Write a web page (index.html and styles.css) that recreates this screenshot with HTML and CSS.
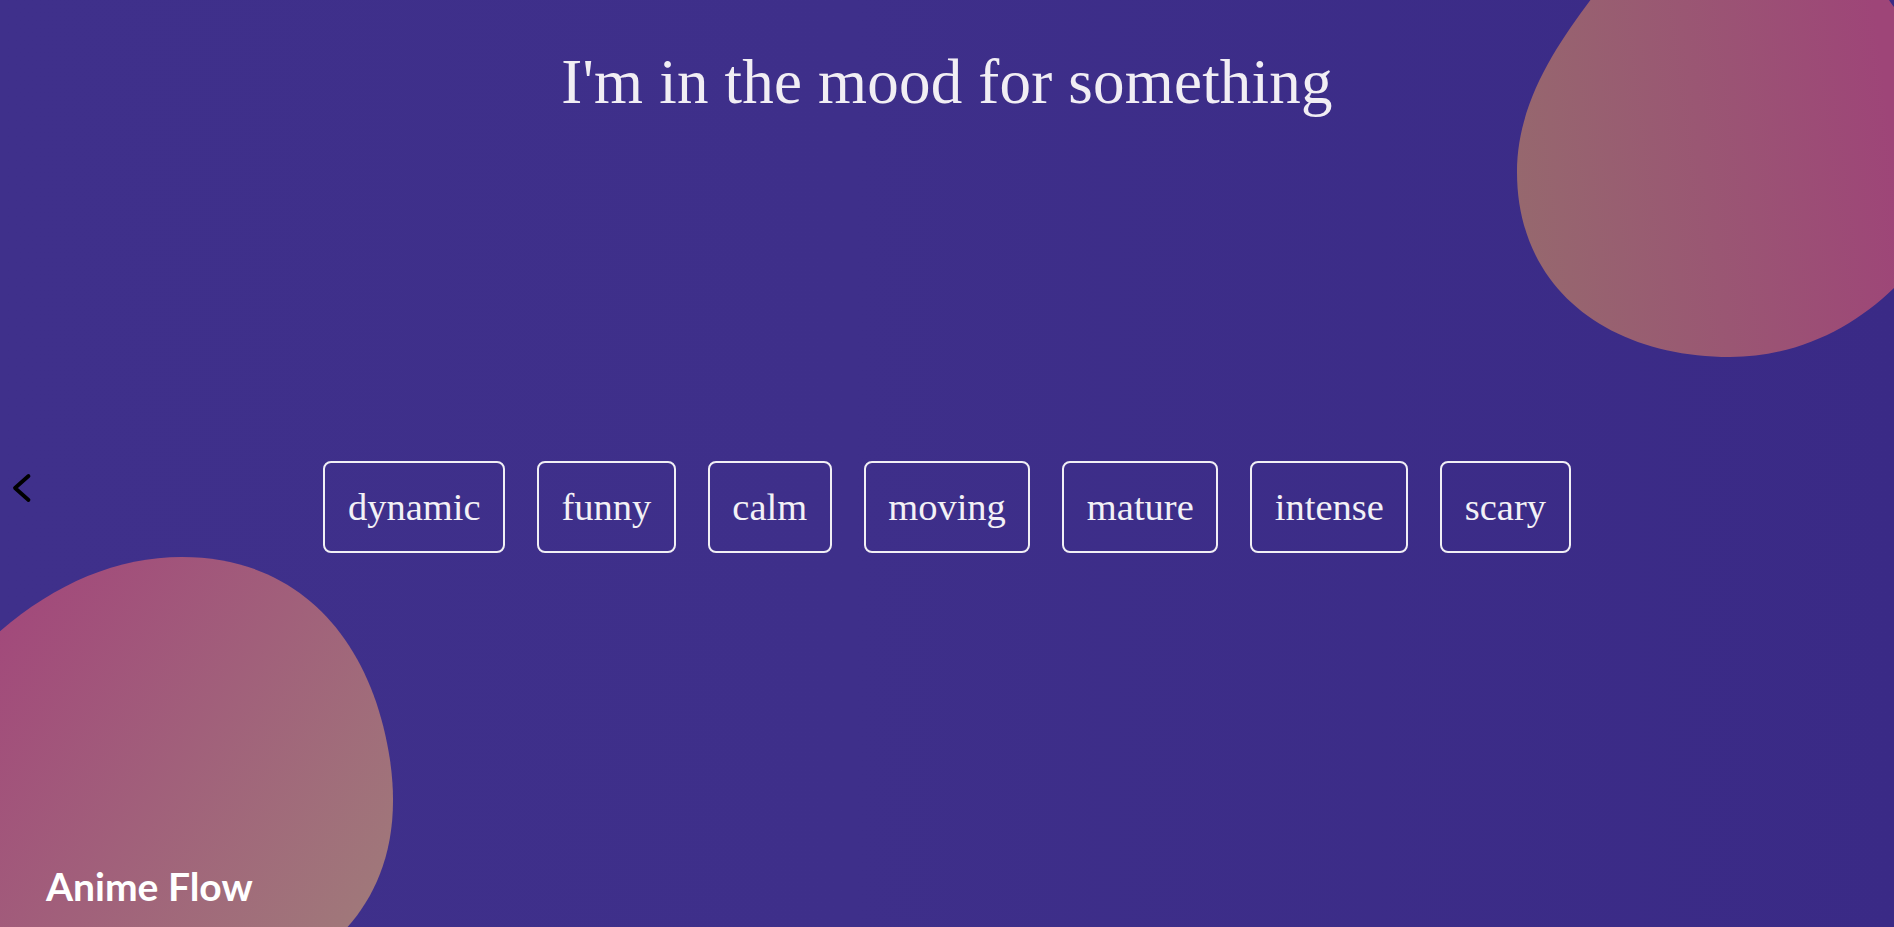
FILE: index.html
```html
<!DOCTYPE html>
<html lang="en">
<head>
<meta charset="utf-8">
<title>Anime Flow</title>
<link rel="stylesheet" href="styles.css">
</head>
<body>
<div class="page">
  <svg class="blobs" width="1894" height="927" viewBox="0 0 1894 927" aria-hidden="true">
    <defs>
      <linearGradient id="gTop" x1="1517" y1="200" x2="1894" y2="150" gradientUnits="userSpaceOnUse">
        <stop offset="0" stop-color="#96686e"/>
        <stop offset="1" stop-color="#9e4578"/>
      </linearGradient>
      <linearGradient id="gBottom" x1="0" y1="600" x2="390" y2="880" gradientUnits="userSpaceOnUse">
        <stop offset="0" stop-color="#a2487b"/>
        <stop offset="1" stop-color="#a0787a"/>
      </linearGradient>
    </defs>
    <path fill="url(#gTop)" d="M 1598 -10 C 1560 40, 1517 100, 1517 172 C 1517 290, 1610 357, 1730 357 C 1800 357, 1858 325, 1900 282 L 1900 14 C 1895 8, 1890 4, 1884 -10 Z"/>
    <path fill="url(#gBottom)" d="M -20 650 C 40 590, 110 557, 182 557 C 300 557, 372 640, 390 760 C 403 850, 372 905, 335 940 L -20 940 Z"/>
  </svg>

  <button class="nav-prev" aria-label="Previous">
    <svg width="20" height="34" viewBox="0 0 20 34"><polyline points="16.5,3 3,15 16.5,27" fill="none" stroke="#000" stroke-width="3.8" stroke-linecap="round" stroke-linejoin="round"/></svg>
  </button>

  <h1 class="title">I'm in the mood for something</h1>

  <div class="moods">
    <button class="mood">dynamic</button>
    <button class="mood">funny</button>
    <button class="mood">calm</button>
    <button class="mood">moving</button>
    <button class="mood">mature</button>
    <button class="mood">intense</button>
    <button class="mood">scary</button>
  </div>

  <footer class="brand">Anime Flow</footer>
</div>
</body>
</html>
```

FILE: styles.css
```css
html, body {
  margin: 0;
  padding: 0;
}

body {
  width: 1894px;
  height: 927px;
  overflow: hidden;
  background: #3d2e89;
}

.page {
  position: relative;
  width: 1894px;
  height: 927px;
  display: flex;
  flex-direction: column;
  align-items: center;
  background: linear-gradient(90deg, #3f308b 0%, #3e2f8a 45%, #3a2a86 100%);
  overflow: hidden;
}

.blobs {
  position: absolute;
  left: 0;
  top: 0;
  z-index: 0;
}

.title {
  position: relative;
  z-index: 1;
  margin: 46px 0 0;
  font-family: "Liberation Serif", "Times New Roman", serif;
  font-weight: 400;
  font-size: 63px;
  line-height: 72px;
  color: #f1eef4;
  letter-spacing: 0.2px;
}

.moods {
  position: relative;
  z-index: 1;
  display: flex;
  gap: 32px;
  margin-top: 343px;
}

.mood {
  font-family: "Liberation Serif", "Times New Roman", serif;
  font-size: 38.5px;
  line-height: 47px;
  color: #f3f1f6;
  background: transparent;
  border: 2.5px solid #f1eff5;
  border-radius: 8px;
  padding: 21px 22.5px 20px;
  margin: 0;
  cursor: pointer;
}

.nav-prev {
  position: absolute;
  left: 12px;
  top: 473px;
  z-index: 2;
  padding: 0;
  margin: 0;
  border: 0;
  background: transparent;
  width: 20px;
  height: 30px;
  cursor: pointer;
}

.nav-prev svg {
  display: block;
}

.brand {
  position: relative;
  z-index: 1;
  align-self: flex-start;
  margin-top: auto;
  padding: 0 0 17px 46px;
  font-family: Lato, "Open Sans", sans-serif;
  font-weight: 700;
  font-size: 39px;
  line-height: 47px;
  color: #ffffff;
}
```
